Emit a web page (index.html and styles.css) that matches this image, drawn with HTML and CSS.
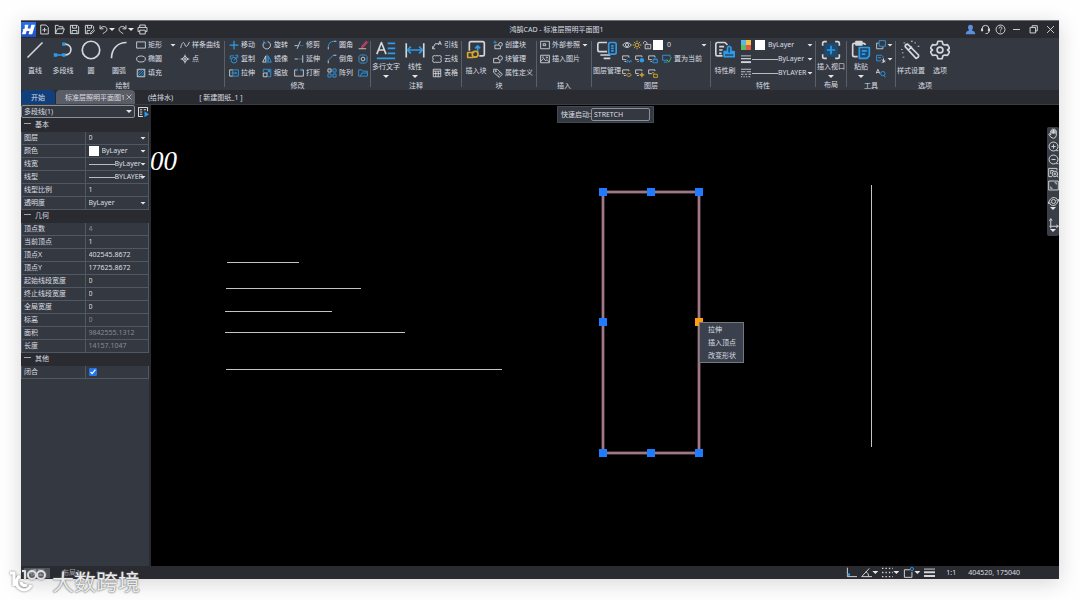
FILE: index.html
```html
<!DOCTYPE html>
<html lang="zh-CN">
<head>
    <meta charset="UTF-8">
    <meta name="viewport" content="width=device-width, initial-scale=1.0">
    <title>鸿鹄CAD - 标准层照明平面图1</title>
    <link rel="stylesheet" href="styles.css">
</head>
<body>
    <!-- Icon sprite -->
    <svg class="sprite" aria-hidden="true">
        <!-- title bar -->
        <symbol id="new" viewBox="0 0 16 16"><path d="M2.500 1.500H10l3.500 3.500v9.500h-11zM8 5.500v6M5 8.500h6"/></symbol>
        <symbol id="open" viewBox="0 0 16 16"><path d="M2 14V2h4l1.500 2H13v3M2 14l3-7h10l-2.500 7z"/></symbol>
        <symbol id="save" viewBox="0 0 16 16"><path d="M2 2h10l2 2v10H2zM5 2v4h6V2M4.500 14V9.500h7V14"/></symbol>
        <symbol id="saveas" viewBox="0 0 16 16"><path d="M8 14H2V2h10l2 2v3M5 2v4h6V2M4.500 14V9.500H9M9.500 14.500l.5-2.500 4-4 1.500 1.500-4 4z"/></symbol>
        <symbol id="undo" viewBox="0 0 16 16"><path d="M3 2v5h5M3 7c3-5 10-4 10 1 0 3-3 4-6 6"/></symbol>
        <symbol id="redo" viewBox="0 0 16 16"><path d="M13 2v5H8M13 7C10 2 3 3 3 8c0 3 3 4 6 6"/></symbol>
        <symbol id="print" viewBox="0 0 16 16"><path d="M4 5V1.500h8V5M4 11H1.500V5h13v6H12M4 9h8v5.500H4z"/></symbol>
        <symbol id="user" viewBox="0 0 16 16"><path class="user" d="M8 1c5 0 4 6 2 8 1 1 5 1 5 6H1c0-5 4-5 5-6-2-2-3-8 2-8z"/></symbol>
        <symbol id="headset" viewBox="0 0 16 16"><path d="M3 7a5 5 0 0 1 10 0v4c0 2-2 3-5 3"/><path class="bold" d="M3 6.500v4M13 6.500v4"/></symbol>
        <symbol id="help" viewBox="0 0 16 16"><circle cx="8" cy="8" r="6.500"/><path d="M5.800 6.500c0-3 4.400-3 4.400-.5C10.200 7.500 8 7.500 8 9.500M8 11v1.200"/></symbol>
        <symbol id="min" viewBox="0 0 16 16"><path d="M3 8h10"/></symbol>
        <symbol id="max" viewBox="0 0 16 16"><path d="M3 5h8v8H3zM6 5V2.500h7.500V10H11"/></symbol>
        <symbol id="close" viewBox="0 0 16 16"><path d="M3 3l10 10M13 3L3 13"/></symbol>

        <!-- draw -->
        <symbol id="line" viewBox="0 0 24 24"><path d="M3 21L21 3"/></symbol>
        <symbol id="pline" viewBox="0 0 24 24"><path class="blue" d="M2 18h13M12 5h3"/><path d="M14 5c10 0 10 13 0 13"/><path class="blue-fill" d="M1 16h4v4H1zM11 16h4v4h-4zM11 3h4v4h-4z"/></symbol>
        <symbol id="circle" viewBox="0 0 24 24"><circle cx="12" cy="12" r="10.500"/></symbol>
        <symbol id="arc" viewBox="0 0 24 24"><path d="M3 22C3 11 10 3 21 3"/></symbol>
        <symbol id="rect" viewBox="0 0 16 16"><path d="M1 3h14v10H1z"/></symbol>
        <symbol id="ellipse" viewBox="0 0 16 16"><ellipse cx="8" cy="8" rx="7" ry="4.800"/></symbol>
        <symbol id="hatch" viewBox="0 0 16 16"><path class="blue" d="M2 6l4-4M2 10l8-8M2 14L14 2M6 14l8-8M10 14l4-4"/><path d="M2 2h12v12H2z"/></symbol>
        <symbol id="spline" viewBox="0 0 16 16"><path d="M1 13C4 0 7 4 8 8s4 3 7-5"/></symbol>
        <symbol id="point" viewBox="0 0 16 16"><path d="M8 1v14M1 8h14M8 3l5 5-5 5-5-5z"/></symbol>

        <!-- modify -->
        <symbol id="move" viewBox="0 0 16 16"><path class="blue thick" d="M8 1v14M1 8h14"/></symbol>
        <symbol id="rotate" viewBox="0 0 16 16"><path d="M9 2.500a6 6 0 1 1-5 1"/><path class="blue" d="M3 1v4h4"/></symbol>
        <symbol id="trim" viewBox="0 0 16 16"><path d="M1 9h5M5 14l5-12"/><path class="blue" d="M10 9h2M13.500 9H15"/></symbol>
        <symbol id="fillet" viewBox="0 0 16 16"><path d="M2 15V11M11 2h4"/><path class="blue" d="M2 11C2 6 6 2 11 2"/></symbol>
        <symbol id="erase" viewBox="0 0 16 16"><path d="M1 14h12"/><path class="pink" d="M6 10l7-8 2 2-7 8H6z"/></symbol>
        <symbol id="copy" viewBox="0 0 16 16"><circle class="blue" cx="8" cy="10" r="4.500"/><path class="blue" d="M2 8V3h6M10 2h4v4M8 10l5-6"/></symbol>
        <symbol id="mirror" viewBox="0 0 16 16"><path d="M6 3v10H1z"/><path class="blue" d="M10 3v10h5zM8 1v14"/></symbol>
        <symbol id="extend" viewBox="0 0 16 16"><path d="M1 8h5M14 2v12"/><path class="blue" d="M7 8h2M10.500 8h2"/></symbol>
        <symbol id="chamfer" viewBox="0 0 16 16"><path d="M2 15v-5M10 2h5"/><path class="blue" d="M2 10l8-8"/></symbol>
        <symbol id="offset" viewBox="0 0 16 16"><path class="blue" d="M4 1.500h8L14.500 4v8L12 14.500H4L1.500 12V4z"/><circle cx="8" cy="8" r="3"/></symbol>
        <symbol id="stretch" viewBox="0 0 16 16"><path d="M6 13H1V3h5"/><path class="blue" d="M6 3h9v10H6zM4 8h8M10 6l2 2-2 2"/></symbol>
        <symbol id="scale" viewBox="0 0 16 16"><path class="blue" d="M2 7V2h12v12H9"/><path d="M2 8h6v6H2z"/><path class="blue" d="M8 8l4-4M9 4h3v3"/></symbol>
        <symbol id="break" viewBox="0 0 16 16"><path d="M4 3H1v10h14V3h-3"/><path class="blue" d="M5 1v4M11 1v4"/></symbol>
        <symbol id="array" viewBox="0 0 16 16"><path d="M1.500 1.500h5v5h-5z"/><path class="blue" d="M9.500 1.500h5v5h-5zM1.500 9.500h5v5h-5zM9.500 9.500h5v5h-5z"/></symbol>
        <symbol id="folder" viewBox="0 0 16 16"><path class="blue" d="M1 13V3h5l1.500 2H15v8zM4 13l2-5h9"/></symbol>

        <!-- annotate -->
        <symbol id="mtext" viewBox="0 0 24 24"><path d="M1 17L6.500 3 12 17M3 12h7"/><path class="blue" d="M14 4h9M14 10h9M14 16h9M1 22h22"/></symbol>
        <symbol id="dim" viewBox="0 0 24 24"><path d="M1.500 4v17M22.500 4v17"/><path class="blue" d="M3 12h18M7 8l-4 4 4 4M17 8l4 4-4 4"/></symbol>
        <symbol id="leader" viewBox="0 0 16 16"><path d="M1 14l4-8h5M1 10v4h4M10 8l2.500-6L15 8M11 6h3"/></symbol>
        <symbol id="cloud" viewBox="0 0 16 16"><path d="M2 3q2-1 4 0 2-1 4 0 2-1 4 0 2 2 0 5 2 3 0 5-2 1-4 0-2 1-4 0-2 1-4 0-2-2 0-5-2-3 0-5z"/></symbol>
        <symbol id="table" viewBox="0 0 16 16"><path d="M2 2h12v12H2zM2 5h12M2 9h12M6 5v9M10 5v9"/></symbol>

        <!-- block / insert -->
        <symbol id="insblock" viewBox="0 0 24 24"><path d="M4 13V4q0-2 2-2h14q2 0 2 2v13q0 2-2 2h-4"/><path class="blue" d="M14 14V7M11 10l3-3 3 3"/><path class="gold" d="M9 21H2v-6h8"/><circle class="gold" cx="11" cy="17" r="3.500"/></symbol>
        <symbol id="mkblock" viewBox="0 0 16 16"><path class="blue" d="M3 1v5M1 3.500h5"/><path d="M9 8H3v6h9v-3"/><circle cx="12" cy="7" r="3"/></symbol>
        <symbol id="mgblock" viewBox="0 0 16 16"><path d="M8 7H1v7h10v-3"/><circle cx="11.500" cy="6.500" r="3.500"/></symbol>
        <symbol id="tag" viewBox="0 0 16 16"><path d="M1 2h6l8 8-5 5-9-8zM7 10l3-3M9 12l3-3"/><circle cx="4.500" cy="5" r="1"/></symbol>
        <symbol id="xref" viewBox="0 0 16 16"><path d="M1 2h14v12H1zM5 6h4v3H5z"/></symbol>
        <symbol id="image" viewBox="0 0 16 16"><path d="M1 2h14v12H1zM1 12l5-5 3 4 2-2 4 4M3 5h3"/><circle cx="11" cy="5.500" r="1"/></symbol>

        <!-- layers -->
        <symbol id="layers" viewBox="0 0 24 24"><path d="M12 14H3q-2 0-2-2V5q0-2 2-2h9M4 18h12M8 22h8"/><path class="blue" d="M16 3h5q2 0 2 2v10q0 2-2 2h-5q-2 0-2-2V5q0-2 2-2zM17 7h3M17 10h3M17 13h3"/></symbol>
        <symbol id="eye" viewBox="0 0 16 16"><path d="M1 8q7-8 14 0-7 8-14 0z"/><circle cx="8" cy="8" r="2.500"/></symbol>
        <symbol id="sun" viewBox="0 0 16 16"><circle class="yellow" cx="8" cy="8" r="3"/><path class="yellow" d="M8 1v2.500M8 12.500V15M1 8h2.500M12.500 8H15M3 3l2 2M11 11l2 2M13 3l-2 2M5 11l-2 2"/></symbol>
        <symbol id="unlock" viewBox="0 0 16 16"><path d="M5 7h9v7H5zM2 6c0-5 6-5 6 0v1M9.500 10v2"/></symbol>
        <symbol id="layoff" viewBox="0 0 16 16"><path d="M7 9H1V3h10v3M4 12h3"/><path class="blue" d="M8 10q3.500 4 7 0M9 12l-1 2M12 12v2M14 11l1 2"/></symbol>
        <symbol id="layfrz" viewBox="0 0 16 16"><path d="M6 9H1V3h10v2M4 12h2"/><circle class="blue-fill" cx="11" cy="10" r="3.500"/></symbol>
        <symbol id="laylck" viewBox="0 0 16 16"><path d="M6 9H1V3h10v2M4 12h2"/><path class="blue" d="M8 9h7v5H8zM9.500 9c0-4 4-4 4 0"/></symbol>
        <symbol id="laycur" viewBox="0 0 16 16"><path class="blue" d="M9 10H1V2h12v3M3 13h6"/><path class="green" d="M8 9l3 4 4-8"/></symbol>
        <symbol id="layon" viewBox="0 0 16 16"><path d="M6 9H1V3h10v2M3 12h3"/><path class="gold" d="M7 11q4-5 8 0-4 5-8 0z"/></symbol>
        <symbol id="laythw" viewBox="0 0 16 16"><path d="M6 9H1V3h10v2M3 12h3"/><circle class="gold" cx="11" cy="11" r="2"/><path class="gold" d="M11 7v8M7 11h8"/></symbol>
        <symbol id="layulk" viewBox="0 0 16 16"><path d="M6 9H1V3h10v2"/><path class="gold" d="M9 10h6v5H9zM6 10c0-4 4-4 4 0"/></symbol>

        <!-- properties -->
        <symbol id="match" viewBox="0 0 24 24"><path d="M9 19H3q-2 0-2-2V5q0-2 2-2h9l3 3M5 8h6M5 12h4M5 16h3"/><path class="blue tint" d="M11 20v-6h4V9q2-3 4 0v5h4v6zM11 16h12"/></symbol>
        <symbol id="palette" viewBox="0 0 16 16"><path class="sw1" d="M0 0h8v8H0z"/><path class="sw2" d="M8 0h8v8H8z"/><path class="sw3" d="M0 8h8v8H0z"/><path class="sw4" d="M8 8h8v8H8z"/></symbol>
        <symbol id="weight" viewBox="0 0 16 16"><path d="M0 3h16"/><path class="thick" d="M0 7.500h16"/><path class="bold" d="M0 13h16"/></symbol>
        <symbol id="dash" viewBox="0 0 16 16"><path d="M0 2h16M0 6h7M9 6h7M0 10h4M6 10h4M12 10h4M0 14h2M4 14h2M8 14h2M12 14h3"/></symbol>

        <!-- layout / tools / options -->
        <symbol id="viewport" viewBox="0 0 24 24"><path class="tint" d="M4 4h16v16H4z"/><path d="M2 7V4q0-2 2-2h3M17 2h3q2 0 2 2v3M22 17v3q0 2-2 2h-3M7 22H4q-2 0-2-2v-3"/><path class="blue" d="M12 7v10M7 12h10"/></symbol>
        <symbol id="paste" viewBox="0 0 24 24"><path d="M8 20H4q-2 0-2-2V6q0-2 2-2h11q2 0 2 2M6 6V2h7v4z"/><path class="blue tint" d="M10 9h12v10l-3 3h-9zM13 13h6M13 17h4"/></symbol>
        <symbol id="copyclip" viewBox="0 0 16 16"><path class="blue" d="M5 1h10v9H5z"/><path d="M4 5H1v9h10v-3"/></symbol>
        <symbol id="cut" viewBox="0 0 16 16"><path class="blue" d="M8 11H1V2h8l2 2v2M3 6h5"/><path d="M9 9l6 4M9 14l6-4M12 7v7"/></symbol>
        <symbol id="find" viewBox="0 0 16 16"><path d="M0 9l3-7 3 7M1 7h4"/><circle class="blue" cx="11" cy="9" r="3.500"/><path class="blue" d="M13 12l2 3"/></symbol>
        <symbol id="style" viewBox="0 0 24 24"><path d="M5 8q0-3 3-3l13 13q1 3-3 4zM9 12l4-4M2 15v1M3 20v1M17 3v1M21 7v1M4 3v1M13 1v1M1 11v1"/></symbol>
        <symbol id="gear" viewBox="0 0 24 24"><path d="M9.500 1.500h5l1 3.500 2 1 3.500-.5 2.500 4.300L21 12l2.500 2.200-2.500 4.300-3.500-.5-2 1-1 3.500h-5l-1-3.500-2-1-3.500.5L.5 14.200 3 12 .5 9.800 3 5.500l3.500.5 2-1z"/><circle cx="12" cy="12" r="3.500"/></symbol>
        <symbol id="quick" viewBox="0 0 16 16"><path d="M14 7V2H2v12h6M4 5h3M4 8h3M9 5h3M4 11h3"/><path class="blue-fill" d="M10 7l6 4-6 4z"/></symbol>

        <!-- view bar -->
        <symbol id="hand" viewBox="0 0 16 16"><path d="M4 10V4q1-1.500 2 0v4V2q1-1.500 2 0v6V2q1-1.500 2 0v6V4q1-1.500 2 0v7q-1 4-4 4-4 0-7-6 0-2 3 1"/></symbol>
        <symbol id="zoomin" viewBox="0 0 16 16"><circle cx="8" cy="8" r="6.500"/><path d="M5 8h6M8 5v6M12 14h3"/></symbol>
        <symbol id="zoomout" viewBox="0 0 16 16"><circle cx="8" cy="8" r="6.500"/><path d="M5 8h6M12 14h3"/></symbol>
        <symbol id="zoomwin" viewBox="0 0 16 16"><path d="M6 14H1V2h12v3M4 10V5h4"/><circle cx="10" cy="10" r="4"/><path d="M8 10h4M10 8v4M13 13l2 2"/></symbol>
        <symbol id="extents" viewBox="0 0 16 16"><path d="M1 1.500h14v13H1zM4 12v-2.500M4 12h2.500M12 4v2.500M12 4H9.500"/></symbol>
        <symbol id="orbit" viewBox="0 0 16 16"><circle cx="8" cy="8" r="3"/><path d="M1 11C2 3 8 0 13 4M15 5C14 13 8 16 3 12M0 8l1 3 3-1M16 8l-1-3-3 1"/></symbol>
        <symbol id="ucs" viewBox="0 0 16 16"><path d="M4 1v11h11M2 4l2-3 2 3M12 10l3 2-3 2M2 12h2v3"/></symbol>

        <!-- status bar -->
        <symbol id="ortho" viewBox="0 0 16 16"><path d="M2 1v13h14"/><circle class="blue-fill" cx="4" cy="11" r="2"/></symbol>
        <symbol id="polar" viewBox="0 0 16 16"><path d="M12 2L1 14h15M7 7c3 1 4 4 4 7"/></symbol>
        <symbol id="grid" viewBox="0 0 16 16"><path class="dots" d="M0 2h16M0 8h16M0 14h16"/></symbol>
        <symbol id="snap" viewBox="0 0 16 16"><path d="M10 4H2v11h11V7"/><circle class="blue" cx="13" cy="3" r="2.300"/></symbol>
        <symbol id="lwt" viewBox="0 0 16 16"><path d="M0 3h16"/><path class="bold" d="M0 7.500h16M0 13h16"/></symbol>
    </svg>

    <div class="window">
        <header class="titlebar">
            <svg class="logo" viewBox="0 0 16 16"><path d="M4 3h4L7 7h3l1-4h4l-3 10H8l1-3.500H6L5 13H1l1.500-5H1l3-1z"/></svg>
            <div class="quick-tools">
                <button aria-label="新建"><svg class="icon"><use href="#new"/></svg></button>
                <button aria-label="打开"><svg class="icon"><use href="#open"/></svg></button>
                <button aria-label="保存"><svg class="icon"><use href="#save"/></svg></button>
                <button aria-label="另存为"><svg class="icon"><use href="#saveas"/></svg></button>
                <button class="more" aria-label="撤销"><svg class="icon"><use href="#undo"/></svg></button>
                <button class="more" aria-label="重做"><svg class="icon"><use href="#redo"/></svg></button>
                <button aria-label="打印"><svg class="icon"><use href="#print"/></svg></button>
            </div>
            <h1>鸿鹄CAD - 标准层照明平面图1</h1>
            <div class="window-tools">
                <button aria-label="用户"><svg class="icon"><use href="#user"/></svg></button>
                <button aria-label="客服"><svg class="icon"><use href="#headset"/></svg></button>
                <button aria-label="帮助"><svg class="icon"><use href="#help"/></svg></button>
                <button class="wide" aria-label="最小化"><svg class="icon"><use href="#min"/></svg></button>
                <button class="wide" aria-label="还原"><svg class="icon"><use href="#max"/></svg></button>
                <button class="wide" aria-label="关闭"><svg class="icon"><use href="#close"/></svg></button>
            </div>
        </header>

        <div class="ribbon">
            <section class="group">
                <div class="tools">
                    <button class="big"><svg><use href="#line"/></svg><span>直线</span></button>
                    <button class="big"><svg><use href="#pline"/></svg><span>多段线</span></button>
                    <button class="big"><svg><use href="#circle"/></svg><span>圆</span></button>
                    <button class="big"><svg><use href="#arc"/></svg><span>圆弧</span></button>
                    <div class="small draw">
                        <button class="more"><svg class="icon"><use href="#rect"/></svg><span>矩形</span></button>
                        <button><svg class="icon"><use href="#ellipse"/></svg><span>椭圆</span></button>
                        <button><svg class="icon"><use href="#hatch"/></svg><span>填充</span></button>
                        <button><svg class="icon"><use href="#spline"/></svg><span>样条曲线</span></button>
                        <button><svg class="icon"><use href="#point"/></svg><span>点</span></button>
                    </div>
                </div>
                <h2>绘制</h2>
            </section>

            <section class="group">
                <div class="tools">
                    <div class="small modify">
                        <button><svg class="icon"><use href="#move"/></svg><span>移动</span></button>
                        <button><svg class="icon"><use href="#copy"/></svg><span>复制</span></button>
                        <button><svg class="icon"><use href="#stretch"/></svg><span>拉伸</span></button>
                        <button><svg class="icon"><use href="#rotate"/></svg><span>旋转</span></button>
                        <button><svg class="icon"><use href="#mirror"/></svg><span>镜像</span></button>
                        <button><svg class="icon"><use href="#scale"/></svg><span>缩放</span></button>
                        <button><svg class="icon"><use href="#trim"/></svg><span>修剪</span></button>
                        <button><svg class="icon"><use href="#extend"/></svg><span>延伸</span></button>
                        <button><svg class="icon"><use href="#break"/></svg><span>打断</span></button>
                        <button><svg class="icon"><use href="#fillet"/></svg><span>圆角</span></button>
                        <button><svg class="icon"><use href="#chamfer"/></svg><span>倒角</span></button>
                        <button><svg class="icon"><use href="#array"/></svg><span>阵列</span></button>
                        <button aria-label="删除"><svg class="icon"><use href="#erase"/></svg></button>
                        <button aria-label="偏移"><svg class="icon"><use href="#offset"/></svg></button>
                        <button aria-label="更多"><svg class="icon"><use href="#folder"/></svg></button>
                    </div>
                </div>
                <h2>修改</h2>
            </section>

            <section class="group">
                <div class="tools">
                    <button class="big menu"><svg><use href="#mtext"/></svg><span>多行文字</span></button>
                    <button class="big menu"><svg><use href="#dim"/></svg><span>线性</span></button>
                    <div class="small">
                        <button><svg class="icon"><use href="#leader"/></svg><span>引线</span></button>
                        <button><svg class="icon"><use href="#cloud"/></svg><span>云线</span></button>
                        <button><svg class="icon"><use href="#table"/></svg><span>表格</span></button>
                    </div>
                </div>
                <h2>注释</h2>
            </section>

            <section class="group">
                <div class="tools">
                    <button class="big"><svg><use href="#insblock"/></svg><span>插入块</span></button>
                    <div class="small">
                        <button><svg class="icon"><use href="#mkblock"/></svg><span>创建块</span></button>
                        <button><svg class="icon"><use href="#mgblock"/></svg><span>块管理</span></button>
                        <button><svg class="icon"><use href="#tag"/></svg><span>属性定义</span></button>
                    </div>
                </div>
                <h2>块</h2>
            </section>

            <section class="group">
                <div class="tools">
                    <div class="small">
                        <button class="more"><svg class="icon"><use href="#xref"/></svg><span>外部参照</span></button>
                        <button><svg class="icon"><use href="#image"/></svg><span>插入图片</span></button>
                    </div>
                </div>
                <h2>插入</h2>
            </section>

            <section class="group">
                <div class="tools">
                    <button class="big"><svg><use href="#layers"/></svg><span>图层管理</span></button>
                    <div class="rows layer-rows">
                        <div class="row">
                            <svg class="icon"><use href="#eye"/></svg>
                            <svg class="icon"><use href="#sun"/></svg>
                            <svg class="icon"><use href="#unlock"/></svg>
                            <i class="swatch"></i>
                            <label class="drop"><select aria-label="当前图层"><option>0</option></select></label>
                        </div>
                        <div class="row spaced">
                            <button aria-label="关闭图层"><svg class="icon"><use href="#layoff"/></svg></button>
                            <button aria-label="冻结图层"><svg class="icon"><use href="#layfrz"/></svg></button>
                            <button aria-label="锁定图层"><svg class="icon"><use href="#laylck"/></svg></button>
                            <button class="current"><svg class="icon"><use href="#laycur"/></svg><span>置为当前</span></button>
                        </div>
                        <div class="row spaced">
                            <button aria-label="打开图层"><svg class="icon"><use href="#layon"/></svg></button>
                            <button aria-label="解冻图层"><svg class="icon"><use href="#laythw"/></svg></button>
                            <button aria-label="解锁图层"><svg class="icon"><use href="#layulk"/></svg></button>
                        </div>
                    </div>
                </div>
                <h2>图层</h2>
            </section>

            <section class="group">
                <div class="tools">
                    <button class="big"><svg><use href="#match"/></svg><span>特性刷</span></button>
                    <div class="rows property-rows">
                        <div class="row"><svg class="icon"><use href="#palette"/></svg><i class="swatch"></i><label class="drop"><select aria-label="颜色"><option>ByLayer</option></select></label></div>
                        <div class="row"><svg class="icon"><use href="#weight"/></svg><i class="rule"></i><label class="drop"><select aria-label="线宽"><option>ByLayer</option></select></label></div>
                        <div class="row"><svg class="icon"><use href="#dash"/></svg><i class="rule"></i><label class="drop"><select aria-label="线型"><option>BYLAYER</option></select></label></div>
                    </div>
                </div>
                <h2>特性</h2>
            </section>

            <section class="group">
                <div class="tools">
                    <button class="big menu"><svg><use href="#viewport"/></svg><span>插入视口</span></button>
                </div>
                <h2>布局</h2>
            </section>

            <section class="group">
                <div class="tools">
                    <button class="big menu"><svg><use href="#paste"/></svg><span>粘贴</span></button>
                    <div class="small clip">
                        <button class="more" aria-label="复制"><svg class="icon"><use href="#copyclip"/></svg></button>
                        <button class="more" aria-label="剪切"><svg class="icon"><use href="#cut"/></svg></button>
                        <button aria-label="查找"><svg class="icon"><use href="#find"/></svg></button>
                    </div>
                </div>
                <h2>工具</h2>
            </section>

            <section class="group">
                <div class="tools">
                    <button class="big"><svg><use href="#style"/></svg><span>样式设置</span></button>
                    <button class="big"><svg><use href="#gear"/></svg><span>选项</span></button>
                </div>
                <h2>选项</h2>
            </section>
        </div>

        <nav class="tabs">
            <a class="home" href="#start">开始</a>
            <a class="active" href="#plan">标准层照明平面图1 <svg class="icon"><use href="#close"/></svg></a>
            <a href="#water">(给排水)</a>
            <a href="#drawing1">[ 新建图纸_1 ]</a>
        </nav>

        <main class="workspace">
            <aside class="panel">
                <div class="picker">
                    <label class="drop"><select aria-label="选择对象"><option>多段线(1)</option></select></label>
                    <button aria-label="快速选择"><svg class="icon"><use href="#quick"/></svg></button>
                </div>
                <table class="props">
                    <tbody>
                        <tr class="head"><th colspan="2">基本</th></tr>
                        <tr><th><label for="layer">图层</label></th><td><div class="drop"><select id="layer"><option>0</option></select></div></td></tr>
                        <tr><th><label for="color">颜色</label></th><td><div class="drop"><i class="swatch"></i><select id="color"><option>ByLayer</option></select></div></td></tr>
                        <tr><th><label for="weight-value">线宽</label></th><td><div class="drop"><i class="rule"></i><select id="weight-value"><option>ByLayer</option></select></div></td></tr>
                        <tr><th><label for="linetype">线型</label></th><td><div class="drop"><i class="rule"></i><select id="linetype"><option>BYLAYER</option></select></div></td></tr>
                        <tr><th><label for="ltscale">线型比例</label></th><td><input id="ltscale" type="text" value="1"></td></tr>
                        <tr><th><label for="alpha">透明度</label></th><td><div class="drop"><select id="alpha"><option>ByLayer</option></select></div></td></tr>
                    </tbody>
                    <tbody>
                        <tr class="head"><th colspan="2">几何</th></tr>
                        <tr><th><label for="count">顶点数</label></th><td><input id="count" type="text" value="4" readonly></td></tr>
                        <tr><th><label for="vertex">当前顶点</label></th><td><input id="vertex" type="text" value="1"></td></tr>
                        <tr><th><label for="vx">顶点X</label></th><td><input id="vx" type="text" value="402545.8672"></td></tr>
                        <tr><th><label for="vy">顶点Y</label></th><td><input id="vy" type="text" value="177625.8672"></td></tr>
                        <tr><th><label for="startw">起始线段宽度</label></th><td><input id="startw" type="text" value="0"></td></tr>
                        <tr><th><label for="endw">终止线段宽度</label></th><td><input id="endw" type="text" value="0"></td></tr>
                        <tr><th><label for="globalw">全局宽度</label></th><td><input id="globalw" type="text" value="0"></td></tr>
                        <tr><th><label for="elev">标高</label></th><td><input id="elev" type="text" value="0" readonly></td></tr>
                        <tr><th><label for="area">面积</label></th><td><input id="area" type="text" value="9842555.1312" readonly></td></tr>
                        <tr><th><label for="length">长度</label></th><td><input id="length" type="text" value="14157.1047" readonly></td></tr>
                    </tbody>
                    <tbody>
                        <tr class="head"><th colspan="2">其他</th></tr>
                        <tr><th><label for="closed">闭合</label></th><td><input id="closed" type="checkbox" checked></td></tr>
                    </tbody>
                </table>
            </aside>

            <div class="canvas">
                <svg class="drawing">
                    <text x="-1" y="65">00</text>
                    <path class="thin" d="M76 157.500h72M75 183.500h135M74 206.500h107M74 227.500h180M75 264.500h276M720.500 80v262"/>
                    <path class="shape" d="M452 87h96v261h-96z"/>
                    <path class="shape-core" d="M452 87h96v261h-96z"/>
                    <path class="grips" d="M448 83h8v8h-8zM496 83h8v8h-8zM544 83h8v8h-8zM448 213h8v8h-8zM448 344h8v8h-8zM496 344h8v8h-8zM544 344h8v8h-8z"/>
                    <path class="hot" d="M544 213h8v8h-8z"/>
                </svg>

                <div class="launcher">
                    <label for="command">快速启动:</label>
                    <input id="command" type="text" value="STRETCH">
                </div>

                <div class="grip-menu">
                    <button>拉伸</button>
                    <button>插入顶点</button>
                    <button>改变形状</button>
                </div>

                <div class="viewbar">
                    <button aria-label="平移"><svg class="icon"><use href="#hand"/></svg></button>
                    <button aria-label="放大"><svg class="icon"><use href="#zoomin"/></svg></button>
                    <button aria-label="缩小"><svg class="icon"><use href="#zoomout"/></svg></button>
                    <button aria-label="窗口缩放"><svg class="icon"><use href="#zoomwin"/></svg></button>
                    <button aria-label="范围缩放"><svg class="icon"><use href="#extents"/></svg></button>
                    <button class="tall" aria-label="动态观察"><svg class="icon"><use href="#orbit"/></svg></button>
                    <button class="tall" aria-label="坐标系"><svg class="icon"><use href="#ucs"/></svg></button>
                </div>
            </div>
        </main>

        <footer class="statusbar">
            <div class="layouts">
                <button class="active">模型</button>
                <button>布局1</button>
                <button>+</button>
            </div>
            <div class="modes">
                <button aria-label="正交"><svg class="icon"><use href="#ortho"/></svg></button>
                <button class="more" aria-label="极轴"><svg class="icon"><use href="#polar"/></svg></button>
                <button class="more" aria-label="栅格"><svg class="icon"><use href="#grid"/></svg></button>
                <button class="more" aria-label="对象捕捉"><svg class="icon"><use href="#snap"/></svg></button>
                <button aria-label="显示线宽"><svg class="icon"><use href="#lwt"/></svg></button>
            </div>
            <span class="ratio">1:1</span>
            <span class="coords">404520, 175040</span>
        </footer>
    </div>

    <div class="watermark">
        <svg viewBox="0 0 40 28">
            <path class="heavy" d="M2 6h4v13M12 9a7.500 7.500 0 1 0 11 9M13 15a4 4 0 0 0 6 3"/>
            <path d="M14 4h3v8"/>
            <circle cx="24" cy="8" r="4"/>
            <circle cx="33" cy="8" r="4"/>
        </svg>
        <span>大数跨境</span>
    </div>
</body>
</html>
```
FILE: styles.css
```css
/* Global Styles */
* {
    box-sizing: border-box;
}

body {
    margin: 0;
    padding: 20px 21px 21px;
    min-height: 100vh;
    display: flex;
    background: #fefefe;
    color: #dcdee2;
    font-family: "Noto Sans", "Noto Sans CJK SC", sans-serif;
    font-size: 7px;
    line-height: 10px;
}

h1, h2 {
    margin: 0;
    font-size: 7px;
    font-weight: normal;
}

button, select, input {
    margin: 0;
    padding: 0;
    border: 0;
    background: none;
    color: inherit;
    font: inherit;
}

button {
    display: flex;
    align-items: center;
    justify-content: center;
    white-space: nowrap;
    cursor: pointer;
}

select {
    appearance: none;
    min-width: 0;
    flex: 1;
    outline: none;
}

option {
    background: #343941;
}

a {
    color: inherit;
    text-decoration: none;
}

/* Icons */
.sprite {
    position: absolute;
    width: 0;
    height: 0;
}

svg {
    fill: none;
    stroke: #d3d6da;
    stroke-width: 1.4px;
    stroke-linejoin: round;
    flex: none;
}

.icon {
    width: 10px;
    height: 10px;
}

.blue { stroke: #2f9be8; }
.gold { stroke: #d9a72e; }
.yellow { stroke: #e8b93c; }
.green { stroke: #3fc26b; }
.pink { stroke: #d8436f; fill: #a8375a; }
.thick { stroke-width: 2px; }
.bold { stroke-width: 3px; }
.tint { fill: #1d4a70; }
path.tint:not(.blue) { stroke: none; }
.blue-fill { fill: #2f9be8; stroke: none; }
.user { fill: #5b8edb; stroke: none; }
.dots { stroke-width: 2px; stroke-dasharray: 2 3; }
.sw1 { fill: #58b7e8; stroke: none; }
.sw2 { fill: #f4c542; stroke: none; }
.sw3 { fill: #62b95e; stroke: none; }
.sw4 { fill: #e2584d; stroke: none; }

/* Small down arrows on menus and drop-downs */
.more::after,
.menu::after,
.tall::after,
.drop::after {
    content: "";
    flex: none;
    width: 6px;
    height: 3px;
    background: #e4e6e9;
    clip-path: polygon(0 0, 100% 0, 50% 100%);
    pointer-events: none;
}

.drop {
    display: flex;
    align-items: center;
    flex: 1;
    min-width: 0;
}

.drop::after {
    margin-left: -6px;
}

.swatch {
    flex: none;
    width: 10px;
    height: 10px;
    background: #fff;
}

.rule {
    flex: none;
    width: 26px;
    height: 1px;
    background: #b9bcc1;
}

/* Window */
.window {
    flex: 1;
    min-width: 0;
    display: flex;
    flex-direction: column;
    background: #292b31;
    box-shadow: 0 4px 20px rgba(0, 0, 0, 0.16);
}

.titlebar {
    display: flex;
    align-items: center;
    height: 18px;
    border-top: 1px solid #6c6f75;
}

.titlebar h1 {
    flex: 1;
    text-align: center;
}

.titlebar .icon {
    width: 11px;
    height: 11px;
}

.logo {
    width: 15px;
    height: 15px;
    background: linear-gradient(#2a6fe6, #1c50c4);
    fill: #fff;
    stroke: none;
}

.quick-tools {
    display: flex;
    padding-left: 1px;
}

.window-tools {
    display: flex;
}

.titlebar button {
    width: 15px;
    height: 16px;
}

.titlebar .more {
    width: 19px;
}

.titlebar .wide {
    width: 17px;
}

/* Ribbon */
.ribbon {
    display: flex;
    background: #343941;
    height: 52px;
}

.group {
    display: flex;
    flex-direction: column;
    flex: none;
    border-right: 1px solid #5b6068;
    border-image: linear-gradient(transparent 8%, #5b6068 8%, #5b6068 92%, transparent 92%) 1;
}

.group:last-child {
    border: 0;
}

.group h2 {
    text-align: center;
    line-height: 11px;
}

.tools {
    display: flex;
    height: 42px;
}

.big {
    flex-direction: column;
    justify-content: flex-start;
    min-width: 28px;
    padding: 2px 1px 0;
}

.big svg {
    width: 20px;
    height: 20px;
    margin-bottom: 2px;
    stroke-width: 2px;
}

.big span {
    line-height: 18px;
}

.menu span {
    line-height: 10px;
}

.menu::after {
    margin-top: 3px;
}

.small {
    display: grid;
    grid-auto-flow: column;
    grid-template-rows: repeat(3, 14px);
    padding: 0 3px;
}

.small button {
    justify-content: flex-start;
    gap: 2px;
}

.draw {
    grid-template-columns: 44px 41px;
}

.draw .more span {
    margin-right: 6px;
}

.modify {
    grid-template-columns: 33px 32px 33px 31px 10px;
    padding: 0 2px 0 4px;
}

.clip {
    padding: 0 2px 0 1px;
}

.clip .more {
    gap: 1px;
}

.rows {
    display: grid;
    grid-template-rows: repeat(3, 14px);
}

.row {
    display: flex;
    align-items: center;
}

.layer-rows {
    width: 88px;
    padding: 0 3px 0 0;
}

.layer-rows .swatch {
    margin: 0 4px 0 1px;
}

.spaced {
    gap: 3px;
}

.current {
    gap: 2px;
    margin-left: 1px;
}

.property-rows {
    width: 76px;
    padding: 0 2px 0 1px;
}

.property-rows .icon {
    width: 12px;
}

.property-rows .swatch {
    margin: 0 3px;
}

/* Drawing tabs */
.tabs {
    display: flex;
    height: 15px;
    line-height: 15px;
    border-bottom: 1px solid #3a3d44;
}

.tabs a {
    padding: 0 13px;
    border-radius: 4px 4px 0 0;
}

.tabs .home {
    padding: 0 10px;
    margin-right: 1px;
    background: #103f7c;
}

.tabs .active {
    display: flex;
    align-items: center;
    padding: 0 2px 0 9px;
    background: #5a5d65;
}

.tabs .icon {
    width: 8px;
    height: 8px;
}

/* Properties panel */
.workspace {
    flex: 1;
    display: flex;
    background: #000;
}

.panel {
    flex: none;
    width: 130px;
    background: #343941;
    border-right: 2px solid #292b31;
}

.picker {
    display: flex;
    height: 13px;
    gap: 2px;
    background: #292b31;
}

.picker .drop {
    padding: 0 2px;
    border: 1px solid #8b919b;
    border-radius: 2px;
    background: #343941;
}

.picker .icon {
    width: 12px;
    height: 12px;
}

.props {
    width: 100%;
    border-collapse: collapse;
    table-layout: fixed;
}

.props th,
.props td {
    height: 13px;
    padding: 0 2px;
    border: 1px solid #515862;
    font-weight: normal;
    text-align: left;
    line-height: 10px;
}

.props td {
    padding: 0 2px 0 3px;
}

.props .head th {
    background: #292b31;
    border-color: #292b31;
}

.head th::before {
    content: "";
    display: inline-block;
    width: 7px;
    height: 1px;
    margin-right: 4px;
    vertical-align: 3px;
    background: #a4a7ac;
}

.props input,
.props select {
    display: block;
    height: 10px;
}

.props input[type="text"] {
    width: 100%;
}

.props input:read-only:not([type="checkbox"]) {
    color: #878b92;
}

.props input[type="checkbox"] {
    width: 8px;
    height: 8px;
    accent-color: #1e74f0;
}

.props .swatch {
    margin-right: 3px;
}

/* Canvas */
.canvas {
    position: relative;
    flex: 1;
    display: flex;
    overflow: hidden;
    background: #000;
}

.drawing {
    width: 100%;
    min-height: 100%;
}

.drawing text {
    fill: #fff;
    stroke: none;
    font: italic 27px "Liberation Serif", serif;
}

.thin { stroke: #c4c4c4; stroke-width: 1px; }
.shape { stroke: #7b5867; stroke-width: 3px; }
.shape-core { stroke: #c497a4; stroke-width: 1px; }
.grips { fill: #1f7bff; stroke: none; }
.hot { fill: #ff9c12; stroke: none; }

.launcher {
    position: absolute;
    top: 1px;
    left: 406px;
    display: flex;
    align-items: center;
    padding: 1px 3px;
    background: #343941;
    border: 1px solid #444a54;
}

.launcher input {
    width: 59px;
    height: 13px;
    padding: 0 2px;
    border: 1px solid #8b919b;
    border-radius: 2px;
}

.grip-menu {
    position: absolute;
    top: 217px;
    left: 548px;
    width: 45px;
    background: #3a414d;
    border: 1px solid #737982;
}

.grip-menu button {
    height: 13px;
    padding-left: 8px;
}

.viewbar {
    position: absolute;
    top: 22px;
    right: 0;
    width: 12px;
    background: #3a3e47;
    border-radius: 2px;
}

.viewbar button {
    width: 12px;
    height: 13px;
}

.viewbar .icon {
    width: 11px;
    height: 11px;
}

.viewbar .tall {
    flex-direction: column;
    height: 22px;
}

/* Status bar */
.statusbar {
    display: flex;
    align-items: center;
    height: 13px;
    padding: 0 39px 0 3px;
}

.layouts {
    display: flex;
    flex: 1;
    gap: 8px;
    color: #a4a7ac;
}

.layouts button {
    padding: 0 4px;
}

.layouts .active {
    padding: 0 6px;
    background: #50545c;
}

.modes {
    display: flex;
    gap: 4px;
}

.modes .icon {
    width: 11px;
    height: 11px;
}

.ratio {
    margin: 0 12px 0 11px;
}

/* Watermark */
.watermark {
    position: absolute;
    left: 8px;
    bottom: 5px;
    display: flex;
    align-items: center;
    gap: 4px;
    color: #e9eaeb;
    font-size: 22px;
    line-height: 28px;
    text-shadow: 0 0 2px #666, 0 0 1px #888;
}

.watermark svg {
    width: 40px;
    height: 28px;
    stroke: #dfe0e2;
    stroke-width: 2px;
    filter: drop-shadow(0 0 1px #777);
}

.watermark .heavy {
    stroke: #fff;
    stroke-width: 3px;
}
```
